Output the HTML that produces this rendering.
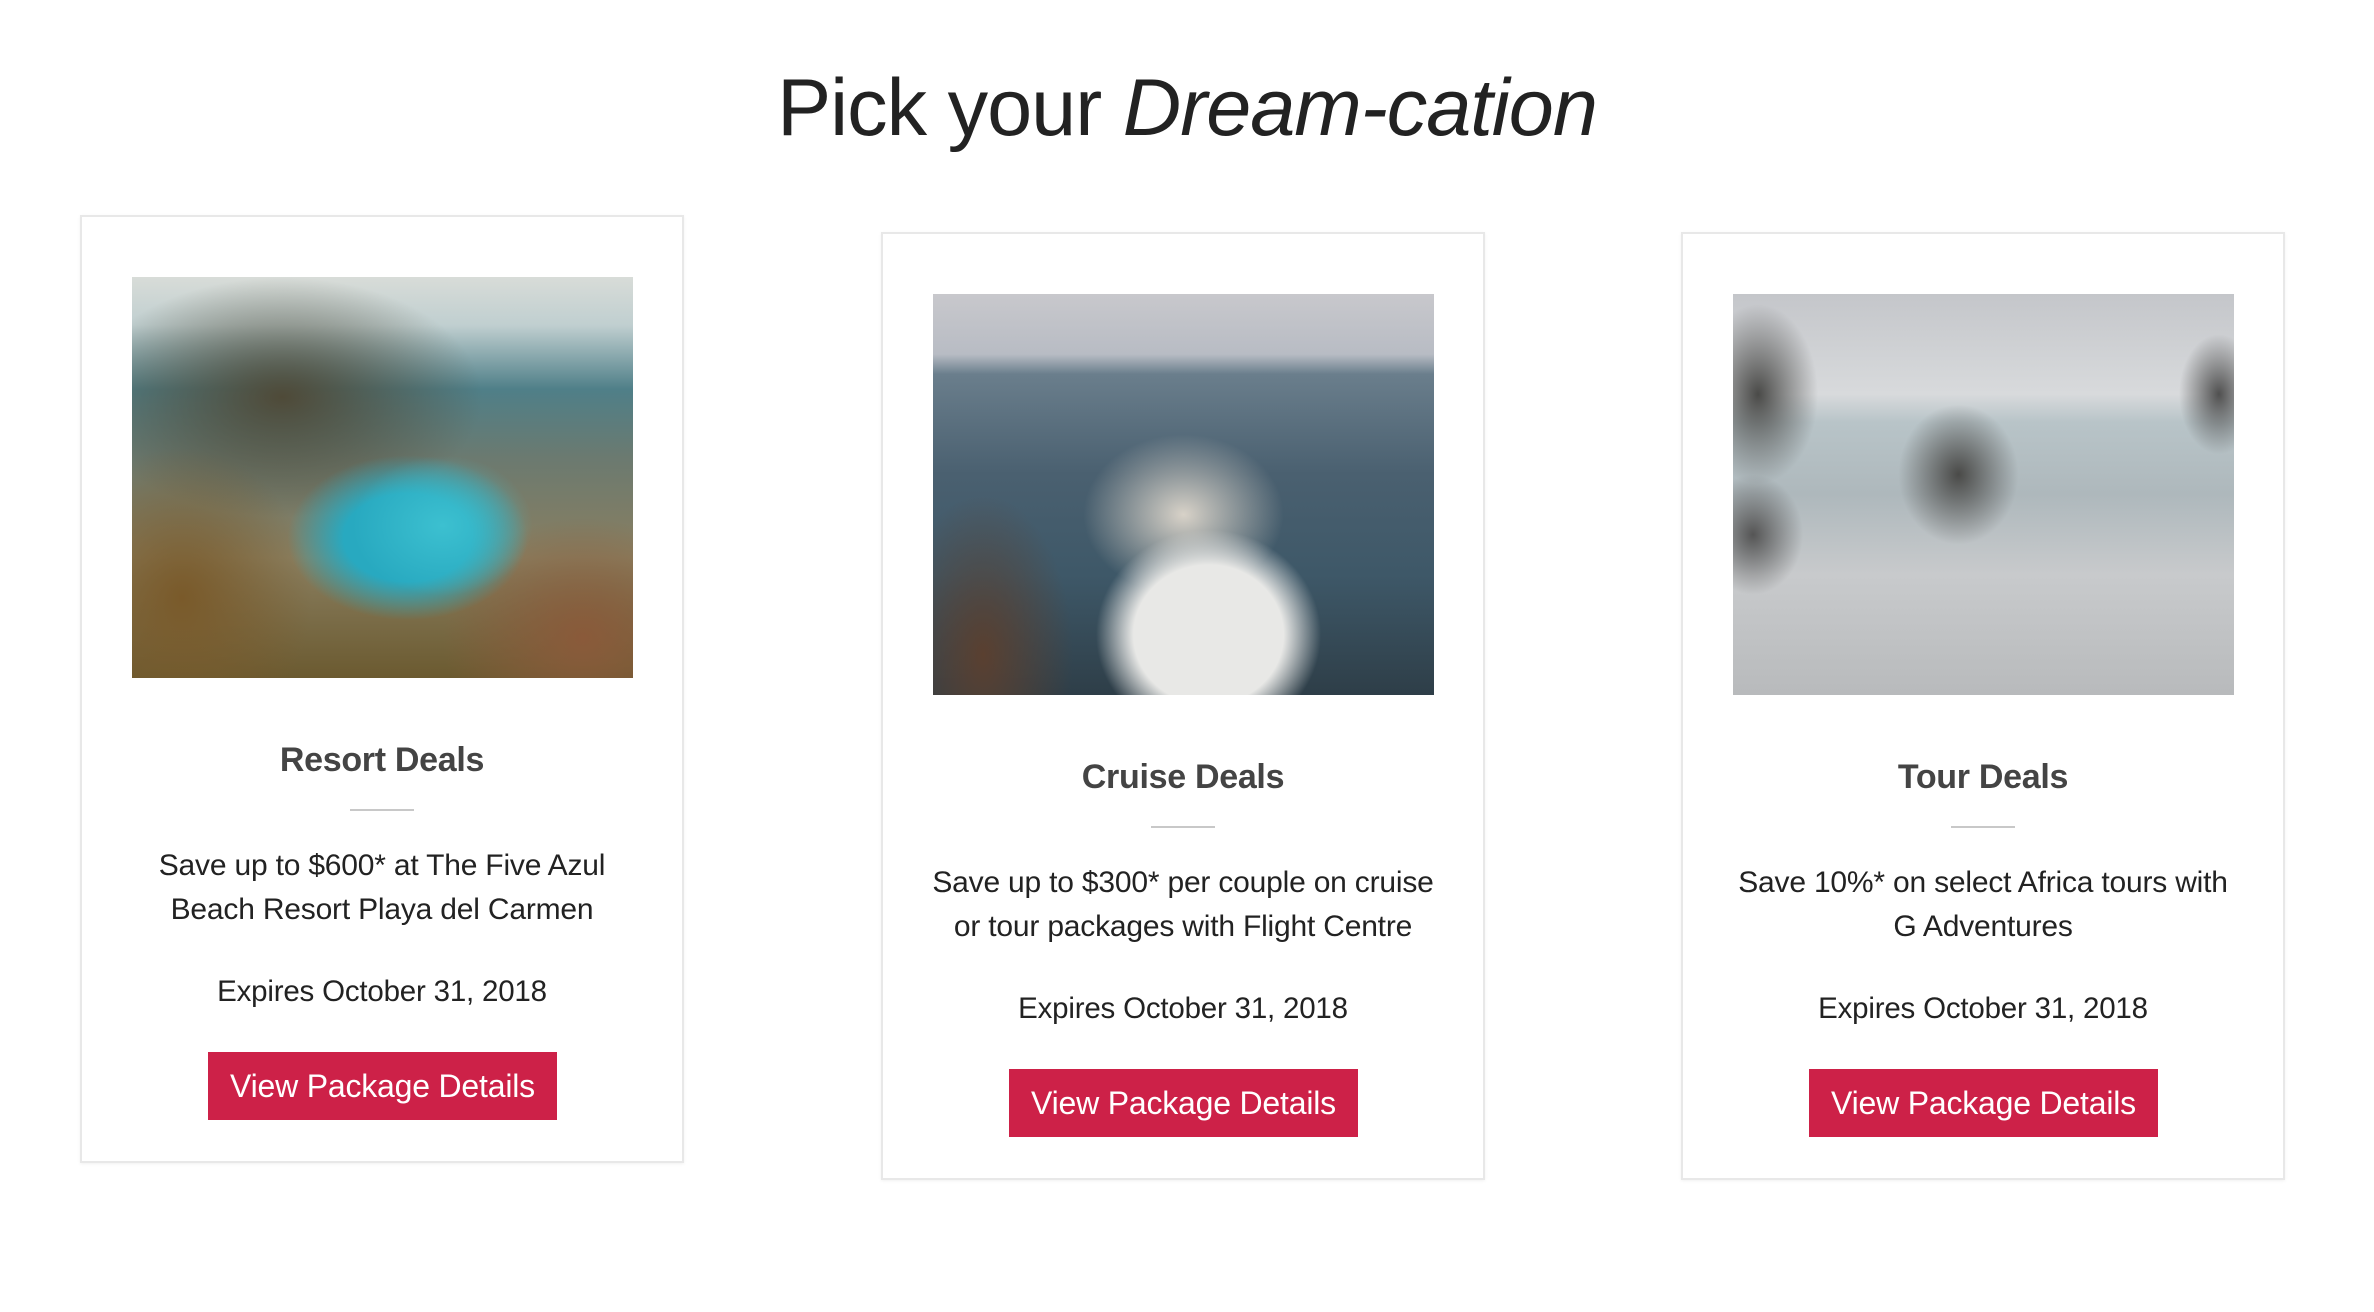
<!DOCTYPE html>
<html><head><meta charset="utf-8"><style>
body{margin:0;width:2374px;height:1312px;background:#fff;font-family:"Liberation Sans",Arial,sans-serif;position:relative;overflow:hidden}
h1{position:absolute;left:0;width:2374px;top:62px;margin:0;text-align:center;font-weight:normal;font-size:81px;color:#222;letter-spacing:-1px}
.card{position:absolute;width:604px;background:#fff;border:2px solid #e8e8e8;box-shadow:0 1px 3px rgba(0,0,0,.06);box-sizing:border-box}
.img{position:absolute;left:50px;top:60px;width:501px;height:401px}
.t{position:absolute;left:0;width:100%;text-align:center}
.h{top:524px;font-size:34px;font-weight:bold;color:#444;letter-spacing:-0.3px}
.d{top:592px;left:268px;width:64px;height:2px;background:#c8c8c8;position:absolute}
.p{top:627px;font-size:30px;line-height:44px;color:#222;letter-spacing:-0.2px}
.e{top:758px;font-size:29.5px;color:#222;letter-spacing:-0.2px}
.b{position:absolute;left:126px;top:835px;width:349px;height:68px;background:#cd2148;color:#fff;font-size:32px;line-height:68px;text-align:center;letter-spacing:-0.2px}
</style></head><body>
<h1>Pick your <i>Dream-cation</i></h1>

<div class="card" style="left:80px;top:215px;height:948px">
<div class="img" style="background:
radial-gradient(ellipse 90px 70px at 62% 62%,#3cc0d0,transparent),
radial-gradient(ellipse 160px 110px at 55% 65%,#28a9c0 40%,transparent 75%),
radial-gradient(ellipse 130px 150px at 10% 80%,#7a5a2a,transparent),
radial-gradient(ellipse 140px 120px at 90% 90%,#8a5a3a,transparent),
radial-gradient(ellipse 200px 120px at 30% 30%,#4f4a38,transparent),
linear-gradient(180deg,#d8dcd8 0%,#c0cfd0 12%,#4f7f88 28%,#6b7a70 45%,#8a7f60 70%,#6b5a30 100%)"></div>
<div class="t h">Resort Deals</div><div class="d"></div>
<div class="t p">Save up to $600* at The Five Azul<br>Beach Resort Playa del Carmen</div>
<div class="t e">Expires October 31, 2018</div>
<div class="b">View Package Details</div>
</div>

<div class="card" style="left:881px;top:232px;height:948px">
<div class="img" style="background:
radial-gradient(ellipse 150px 140px at 55% 85%,#e8e8e6 50%,transparent 75%),
radial-gradient(ellipse 100px 80px at 50% 55%,#d8d2c8,transparent),
radial-gradient(ellipse 90px 160px at 10% 90%,#5a4030,transparent),
linear-gradient(180deg,#c8c8cc 0%,#b8bcc4 15%,#6a7e8c 20%,#4a6070 45%,#3e5868 70%,#2e3e48 100%)"></div>
<div class="t h">Cruise Deals</div><div class="d"></div>
<div class="t p">Save up to $300* per couple on cruise<br>or tour packages with Flight Centre</div>
<div class="t e">Expires October 31, 2018</div>
<div class="b">View Package Details</div>
</div>

<div class="card" style="left:1681px;top:232px;height:948px">
<div class="img" style="background:
radial-gradient(ellipse 60px 70px at 45% 45%,#4a4a48,transparent),
radial-gradient(ellipse 60px 90px at 5% 25%,#4a4a48,transparent),
radial-gradient(ellipse 40px 60px at 97% 25%,#505050,transparent),
radial-gradient(ellipse 50px 60px at 4% 60%,#555,transparent),
linear-gradient(180deg,#c4c6ca 0%,#d8dadc 25%,#b8c4c8 32%,#aeb8bc 50%,#c8cacc 70%,#b8babc 100%)"></div>
<div class="t h">Tour Deals</div><div class="d"></div>
<div class="t p">Save 10%* on select Africa tours with<br>G Adventures</div>
<div class="t e">Expires October 31, 2018</div>
<div class="b">View Package Details</div>
</div>
</body></html>
